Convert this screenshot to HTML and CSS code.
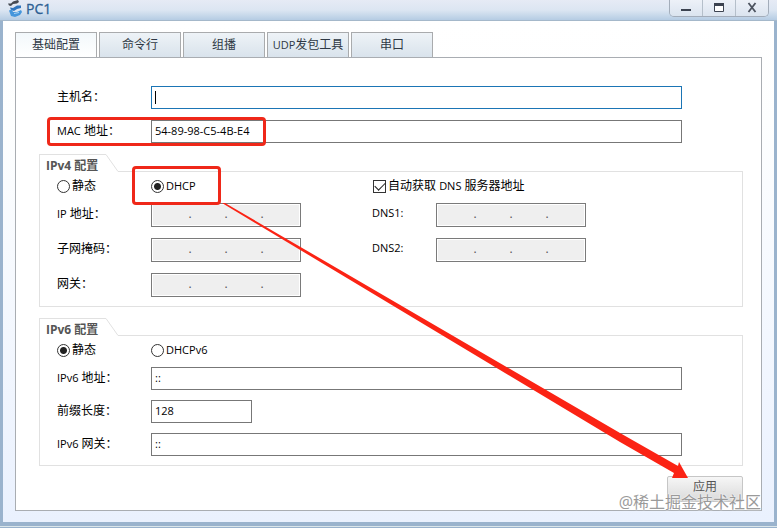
FILE: index.html
```html
<!DOCTYPE html>
<html lang="zh-CN">
<head>
<meta charset="utf-8">
<title>PC1</title>
<link rel="stylesheet" href="styles.css">
</head>
<body>
<div class="window">
  <header class="titlebar">
    <svg class="logo" viewBox="0 0 16 17" aria-hidden="true">
      <path d="M0 3.500 3 3.500 5 1.500 10 0 11 2 9 3.500 5 4 3 6 1 5.500Z" fill="#454a53"/>
      <path d="M2 7.500 5 8 9 5.500 13 5.500V8L9 9 6 11 3 10Z" fill="#2f74bd"/>
      <path d="M1 10.500 4 9.500 5 12 9 12 13 10 14 12 12 15 7 17 3 16Z" fill="#4596dc"/>
      <path d="M6 13.500 11 12.500" stroke="#a9d4f5"/>
    </svg>
    <h1 class="title">PC1</h1>
    <div class="window-controls">
      <button type="button" aria-label="最小化"><svg viewBox="0 0 12 12"><path d="M1 8h10" stroke="#3c4350" stroke-width="2"/></svg></button>
      <button type="button" aria-label="最大化"><svg viewBox="0 0 12 12"><path d="M1.500 1.500h9v8h-9z" fill="#fff" stroke="#3c4350"/><path d="M1 2.500h10" stroke="#3c4350" stroke-width="3"/></svg></button>
      <button type="button" aria-label="关闭"><svg viewBox="0 0 12 12"><path d="M2.500 1 9.500 10M9.500 1 2.500 10" stroke="#4c535f" stroke-width="1.800"/></svg></button>
    </div>
  </header>
  <main class="content">
    <nav class="tabs" role="tablist">
      <button type="button" role="tab" aria-selected="true" class="tab active">基础配置</button>
      <button type="button" role="tab" class="tab">命令行</button>
      <button type="button" role="tab" class="tab">组播</button>
      <button type="button" role="tab" class="tab"><span class="latin">UDP</span>发包工具</button>
      <button type="button" role="tab" class="tab">串口</button>
    </nav>
    <form class="panel">
      <div class="identity">
        <div class="row">
          <label for="host">主机名：</label>
          <input id="host" class="text host" type="text">
          <span class="caret"></span>
        </div>
        <div class="row">
          <label for="mac"><span class="latin">MAC</span> 地址：</label>
          <input id="mac" class="text" type="text" value="54-89-98-C5-4B-E4">
          <span class="mark mark-mac"></span>
        </div>
      </div>

      <section class="group">
        <div class="group-head">
          <h2>IPv4 配置</h2>
          <svg class="slant" viewBox="0 0 14 18" aria-hidden="true"><path d="M0 .5h1L13 17.500h1" fill="none" stroke="#e1e1e1"/></svg>
        </div>
        <div class="group-body">
          <div class="choices">
            <label class="choice"><input type="radio" name="v4">静态</label>
            <label class="choice"><input type="radio" name="v4" checked><span class="latin">DHCP</span></label>
            <label class="choice"><input type="checkbox" checked><span>自动获取 <span class="latin">DNS</span> 服务器地址</span></label>
            <span class="mark mark-dhcp"></span>
          </div>
          <div class="addresses">
            <label for="ip"><span class="latin">IP</span> 地址：</label>
            <span class="ip"><input id="ip" disabled><span class="dots"><i>.</i><i>.</i><i>.</i></span></span>
            <label for="dns1" class="dns latin">DNS1:</label>
            <span class="ip"><input id="dns1" disabled><span class="dots"><i>.</i><i>.</i><i>.</i></span></span>
            <label for="mask" class="first">子网掩码：</label>
            <span class="ip"><input id="mask" disabled><span class="dots"><i>.</i><i>.</i><i>.</i></span></span>
            <label for="dns2" class="dns latin">DNS2:</label>
            <span class="ip"><input id="dns2" disabled><span class="dots"><i>.</i><i>.</i><i>.</i></span></span>
            <label for="gw" class="first">网关：</label>
            <span class="ip"><input id="gw" disabled><span class="dots"><i>.</i><i>.</i><i>.</i></span></span>
          </div>
        </div>
      </section>

      <section class="group">
        <div class="group-head">
          <h2>IPv6 配置</h2>
          <svg class="slant" viewBox="0 0 14 18" aria-hidden="true"><path d="M0 .5h1L13 17.500h1" fill="none" stroke="#e1e1e1"/></svg>
        </div>
        <div class="group-body">
          <div class="choices">
            <label class="choice"><input type="radio" name="v6" checked>静态</label>
            <label class="choice"><input type="radio" name="v6"><span class="latin">DHCPv6</span></label>
          </div>
          <div class="rows">
            <div class="row">
              <label for="ip6"><span class="latin">IPv6</span> 地址：</label>
              <input id="ip6" class="text" type="text" value="::">
            </div>
            <div class="row">
              <label for="prefix">前缀长度：</label>
              <input id="prefix" class="text short" type="text" value="128">
            </div>
            <div class="row">
              <label for="gw6"><span class="latin">IPv6</span> 网关：</label>
              <input id="gw6" class="text" type="text" value="::">
            </div>
          </div>
        </div>
      </section>

      <div class="actions"><button type="button" class="apply">应用</button></div>
      <svg class="arrow" viewBox="0 0 468 276" aria-hidden="true"><path d="M0 0H3L398 230 456 263 457 259 466 275 450 275 452 270 398 239Z" fill="#fb2314"/></svg>
      <span class="watermark">@稀土掘金技术社区</span>
    </form>
  </main>
</div>
</body>
</html>
```
FILE: styles.css
```css
* { box-sizing: border-box; }

body {
  margin: 0;
  font: 12px/18px "Open Sans", "Noto Sans CJK SC", sans-serif;
  color: #000;
}

button, input { font: inherit; color: inherit; }

.latin { font-size: 11px; }

.window {
  display: flex;
  flex-direction: column;
  min-height: 100vh;
  padding: 0 3px 6px;
  background: #9ab3cd;
  box-shadow: inset 0 -1px #9ab3cd, inset 0 -2px #dbe6ea;
}

.titlebar {
  display: flex;
  align-items: flex-start;
  height: 21px;
  margin: 0 -3px;
  padding: 0 8px;
  background: linear-gradient(#e6ebf5, #dce6f2 50%, #b5cce3);
  border-bottom: 1px solid #a5b8ca;
}

.logo { width: 16px; height: 17px; }

.title {
  flex: 1;
  margin: 0 0 0 2px;
  font-size: 14px;
  line-height: 18px;
  font-weight: 400;
  color: #2d5f93;
  -webkit-text-stroke: 0.3px;
}

.window-controls {
  display: flex;
  width: 100px;
  height: 17px;
  border: 1px solid #a3adba;
  border-top: 0;
  border-radius: 0 0 5px 5px;
  overflow: hidden;
}

.window-controls button {
  flex: 1;
  padding: 0;
  border: 0;
  background: linear-gradient(#edf1f8, #dbe4ef);
  line-height: 0;
}

.window-controls button + button { border-left: 1px solid #b5bfca; }
.window-controls svg { width: 12px; height: 12px; }

.content {
  flex: 1;
  display: flex;
  flex-direction: column;
  padding: 11px 12px;
  background: linear-gradient(#fff, #fdfefe 20%, #eaf1fe);
}

.tabs { display: flex; gap: 2px; }

.tab {
  width: 82px;
  height: 25px;
  padding: 0;
  border: 1px solid #a9abad;
  border-bottom: 0;
  background: linear-gradient(#eef3f7, #d9e3ec);
  color: #2e3844;
  white-space: nowrap;
}

.active { background: linear-gradient(#f3f8fb, #fff); }

.panel {
  position: relative;
  flex: 1;
  display: flex;
  flex-direction: column;
  padding: 28px 18px 8px 23px;
  border: 1px solid #a9adb2;
  background: #fff;
}

.identity {
  display: grid;
  gap: 11px;
  padding: 0 61px 0 18px;
}

.row {
  position: relative;
  display: grid;
  grid-template-columns: 94px 1fr;
}

.row label { line-height: 22px; }

.text {
  width: 100%;
  height: 23px;
  padding: 0 3px 3px;
  border: 1px solid #777;
  border-radius: 0;
  background: #fff;
  font-size: 11px;
}

.short { width: 101px; }
.host { border-color: #1b75b5; }

.caret {
  position: absolute;
  left: 98px;
  top: 5px;
  width: 1px;
  height: 13px;
  background: #000;
}

.mark {
  position: absolute;
  z-index: 1;
  border: 3px solid #ef2819;
  border-radius: 4px;
  pointer-events: none;
}

.mark-mac { left: -10px; top: -3px; width: 219px; height: 29px; }
.mark-dhcp { left: 75px; top: -10px; width: 89px; height: 39px; }

.group { margin-top: 11px; }

.group-head {
  position: relative;
  display: flex;
  height: 18px;
  margin-bottom: -1px;
}

.group-head h2 {
  width: 66px;
  margin: 0;
  padding: 2px 0 0 6px;
  border: 1px solid #e1e1e1;
  border-width: 1px 0 0 1px;
  background: #fff;
  font-size: 12px;
  font-weight: 700;
  color: #555;
}

.slant { width: 14px; height: 18px; background: #fff; }

.group-body {
  padding: 4px 60px 9px 17px;
  border: 1px solid #e1e1e1;
}

.choices {
  position: relative;
  display: grid;
  grid-template-columns: 94px 222px 1fr;
  height: 20px;
}

.choice {
  display: flex;
  align-items: center;
  gap: 2px;
  white-space: nowrap;
}

.choice input {
  appearance: none;
  display: grid;
  place-items: center;
  width: 13px;
  height: 13px;
  margin: 0;
  border: 1px solid #333;
  background: #fff;
}

.choice input[type="radio"] { border-radius: 50%; }

.choice input[type="radio"]:checked {
  background: radial-gradient(circle, #222 3px, #fff 4px);
}

.choice input[type="checkbox"]:checked::after {
  content: "";
  width: 9px;
  height: 5px;
  border: solid #222;
  border-width: 0 0 1px 1px;
  transform: translateY(-1px) rotate(-45deg);
}

.addresses {
  display: grid;
  grid-template-columns: 94px 221px 64px 150px;
  row-gap: 11px;
  padding-top: 7px;
}

.addresses label { line-height: 22px; }
.addresses .dns { line-height: 20px; }
.addresses .first { grid-column: 1; }

.ip {
  position: relative;
  width: 150px;
  height: 24px;
}

.ip input {
  display: block;
  width: 100%;
  height: 24px;
  border: 1px solid #7a7a7a;
  background: #efefef;
  box-shadow: inset 0 0 0 1px #fff;
}

.dots {
  position: absolute;
  left: 21px;
  top: 2px;
  display: flex;
  color: #555;
}

.dots i {
  width: 36px;
  font-style: normal;
  text-align: center;
}

.rows {
  display: grid;
  gap: 10px;
  padding-top: 7px;
}

.actions {
  display: flex;
  justify-content: flex-end;
  margin-top: 10px;
}

.apply {
  width: 76px;
  height: 26px;
  padding: 0 0 4px;
  border: 1px solid #c6c6c6;
  border-radius: 2px;
  background: linear-gradient(#f6f6f6, #dadada);
  color: #555;
}

.arrow {
  position: absolute;
  left: 206px;
  top: 145px;
  width: 468px;
  height: 276px;
  pointer-events: none;
}

.watermark {
  position: absolute;
  right: 0;
  bottom: -2px;
  font-size: 16px;
  line-height: 20px;
  color: #9a9a9a;
  text-shadow: 0 0 1px #fff, 0 0 2px #fff;
  pointer-events: none;
}
```
